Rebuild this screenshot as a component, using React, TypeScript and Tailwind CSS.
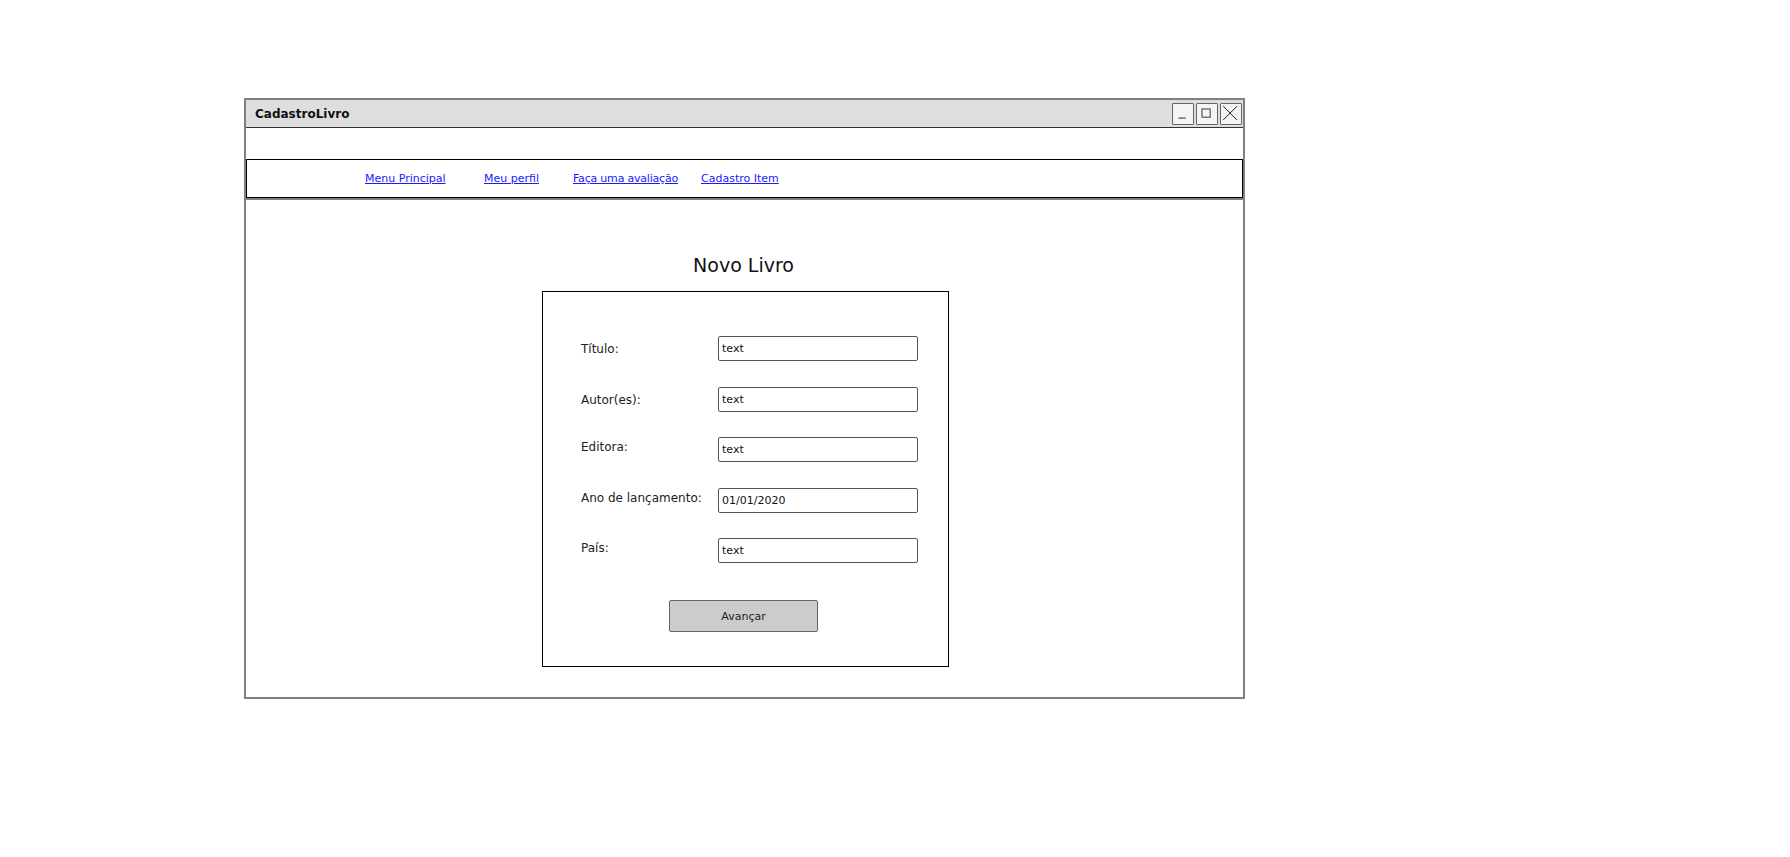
import React from 'react';

const font = { fontFamily: '"DejaVu Sans", "Liberation Sans", sans-serif' };

const fields = [
  { label: 'Título:', value: 'text', lift: false },
  { label: 'Autor(es):', value: 'text', lift: false },
  { label: 'Editora:', value: 'text', lift: true },
  { label: 'Ano de lançamento:', value: '01/01/2020', lift: true },
  { label: 'País:', value: 'text', lift: true },
];

const WinButton = ({ kind }: { kind: 'min' | 'max' | 'close' }) => (
  <div className="w-[22px] h-[22px] border-[1.5px] border-[#666] bg-[#f4f4f4] rounded-[1px]">
    <svg viewBox="0 0 22 22" className="w-full h-full">
      {kind === 'min' && <line x1="6" y1="15.5" x2="14" y2="15.5" stroke="#555" strokeWidth="1.4" />}
      {kind === 'max' && <rect x="5.5" y="5.5" width="9" height="9" fill="none" stroke="#555" strokeWidth="1.3" />}
      {kind === 'close' && (
        <g stroke="#222" strokeWidth="1.1">
          <line x1="2.5" y1="2.5" x2="17.5" y2="17.5" />
          <line x1="17.5" y1="2.5" x2="2.5" y2="17.5" />
        </g>
      )}
    </svg>
  </div>
);

export default function App() {
  return (
    <div className="w-[1790px] h-[857px] bg-white pl-[244px] pt-[98px]" style={font}>
      <div className="w-[1001px] h-[601px] border-2 border-[#808080] flex flex-col">
        {/* Title bar */}
        <div className="h-[28px] bg-[#dedede] border-b border-[#333] flex items-center justify-between pl-[9px] pr-[1px]">
          <span className="text-[12px] font-bold text-[#111] pt-[1px]">CadastroLivro</span>
          <div className="flex gap-[2px]">
            <WinButton kind="min" />
            <WinButton kind="max" />
            <WinButton kind="close" />
          </div>
        </div>

        <div className="h-[31px]" />

        {/* Nav */}
        <div className="h-[39px] border border-black flex items-center pt-[2px] pl-[118px] text-[11px] text-[#1a1aff]">
          <span className="w-[119px]"><a className="underline cursor-pointer">Menu Principal</a></span>
          <span className="w-[89px]"><a className="underline cursor-pointer">Meu perfil</a></span>
          <span className="w-[128px]"><a className="underline cursor-pointer tracking-[-0.2px]">Faça uma avaliação</a></span>
          <span><a className="underline cursor-pointer">Cadastro Item</a></span>
        </div>
        <div className="h-[2px] bg-[#808080]" />

        {/* Content */}
        <div className="flex flex-col items-center">
          <h1 className="mt-[53px] text-[19px] leading-[24px] text-[#111] ml-[2px] mr-[4px]">Novo Livro</h1>
          <div className="mt-[14px] ml-[2px] w-[407px] h-[376px] border border-black pt-[44px] pl-[38px] flex flex-col">
            <div className="flex flex-col gap-[25.5px]">
              {fields.map((f) => (
                <div key={f.label} className="flex items-center h-[25px]">
                  <span className={`w-[137px] text-[12px] text-[#222] ${f.lift ? '-mt-[5px]' : 'mt-[1px]'}`}>{f.label}</span>
                  <div className="w-[200px] h-[25px] border border-[#555] rounded-[2px] flex items-center pl-[3px] pt-[2px] text-[11px] text-[#111]">
                    {f.value}
                  </div>
                </div>
              ))}
            </div>
            <button className="mt-[37px] ml-[88px] w-[149px] h-[32px] bg-[#cccccc] border border-[#666] rounded-[2px] pt-[3px] text-[11px] text-[#222]">
              Avançar
            </button>
          </div>
        </div>
      </div>
    </div>
  );
}
